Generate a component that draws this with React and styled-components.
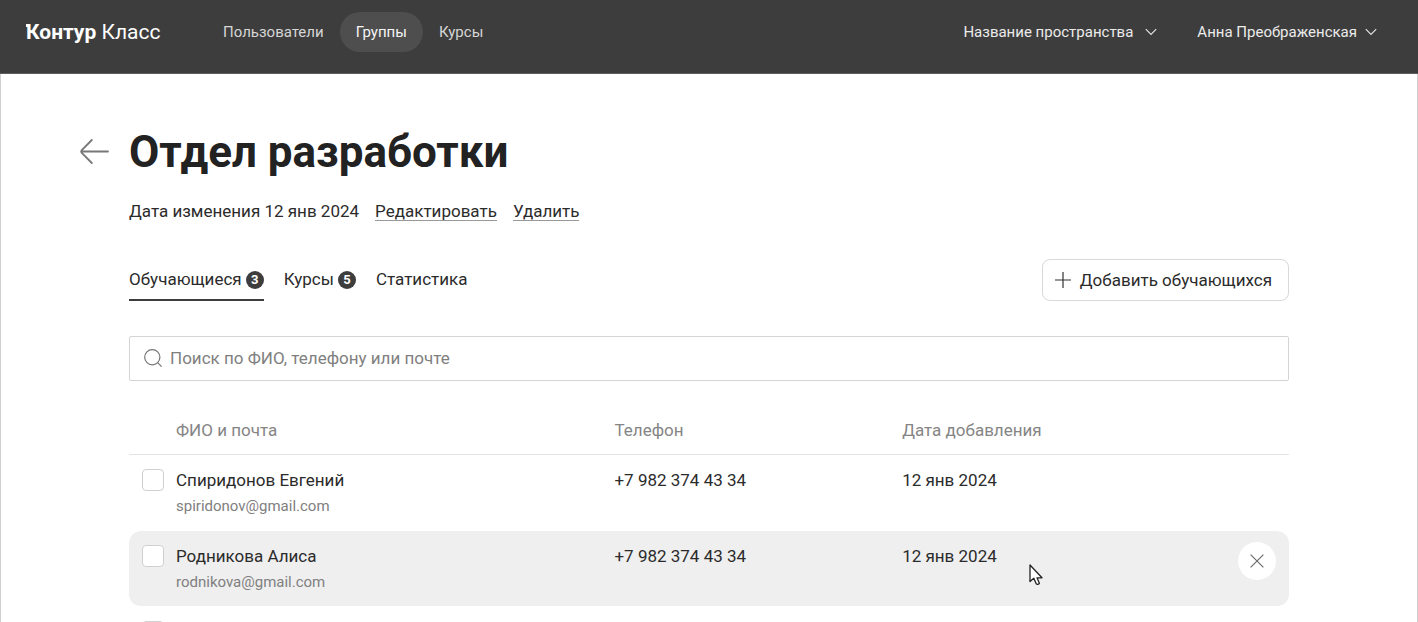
import styled, { createGlobalStyle } from 'styled-components';

const rows = [
  { name: 'Спиридонов Евгений', mail: 'spiridonov@gmail.com', phone: '+7 982 374 43 34', date: '12 янв 2024' },
  { name: 'Родникова Алиса', mail: 'rodnikova@gmail.com', phone: '+7 982 374 43 34', date: '12 янв 2024', hovered: true },
  { name: '', mail: '', phone: '', date: '' },
];

const Chevron = () => (
  <svg width="12" height="8" viewBox="0 0 12 8" fill="none" stroke="#e6e6e6" strokeWidth="1.1">
    <path d="M0.8 1.2 L6 6.4 L11.2 1.2" />
  </svg>
);

const App = () => {
  return (
    <Page>
      <GlobalStyle />
      <TopBar>
        <Logo href="#"><b>Контур</b> Класс</Logo>
        <Nav>
          <NavLink href="#">Пользователи</NavLink>
          <NavLink href="#" $active>Группы</NavLink>
          <NavLink href="#">Курсы</NavLink>
        </Nav>
        <Account>
          <MenuButton $gap="12px">Название пространства <Chevron /></MenuButton>
          <MenuButton $gap="8px">Анна Преображенская <Chevron /></MenuButton>
        </Account>
      </TopBar>
      <Main>
        <Heading>
          <BackLink href="#" aria-label="←">
            <svg width="30" height="26" viewBox="0 0 30 26" fill="none" stroke="#777" strokeWidth="1.8" strokeLinecap="round" strokeLinejoin="round">
              <path d="M28 12.5 H1.5 M11.8 1 L1.8 11.1 Q0.6 12.5 1.8 13.9 L11.8 24" />
            </svg>
          </BackLink>
          <Title>Отдел разработки</Title>
        </Heading>
        <Content>
          <Meta>
            <span>Дата изменения 12 янв 2024</span>
            <MetaLink href="#">Редактировать</MetaLink>
            <MetaLink href="#">Удалить</MetaLink>
          </Meta>
          <Toolbar>
            <Tabs>
              <Tab $active>Обучающиеся <Badge>3</Badge></Tab>
              <Tab>Курсы <Badge>5</Badge></Tab>
              <Tab>Статистика</Tab>
            </Tabs>
            <AddButton>
              <svg width="16" height="16" viewBox="0 0 16 16" fill="none" stroke="#333" strokeWidth="1.2">
                <path d="M8 0 V16 M0 8 H16" />
              </svg>
              Добавить обучающихся
            </AddButton>
          </Toolbar>
          <Search>
            <svg width="18" height="18" viewBox="0 0 18 18" fill="none" stroke="#757575" strokeWidth="1.2">
              <circle cx="8.3" cy="8.3" r="7.6" />
              <path d="M13.6 13.6 L17.6 17.6" />
            </svg>
            <input type="text" placeholder="Поиск по ФИО, телефону или почте" />
          </Search>
          <Table>
            <colgroup>
              <col style={{ width: '47px' }} />
              <col style={{ width: '37.8%' }} />
              <col style={{ width: '24.8%' }} />
              <col />
              <col style={{ width: '51px' }} />
            </colgroup>
            <thead>
              <tr>
                <Th />
                <Th>ФИО и почта</Th>
                <Th>Телефон</Th>
                <Th>Дата добавления</Th>
                <Th />
              </tr>
            </thead>
            <tbody>
              {rows.map((row, i) => (
                <Row key={i} $hovered={row.hovered}>
                  <CheckCell><Checkbox type="checkbox" aria-labelledby={`name-${i}`} /></CheckCell>
                  <Td>
                    <div id={`name-${i}`}>{row.name}</div>
                    <Mail>{row.mail}</Mail>
                  </Td>
                  <Td>{row.phone}</Td>
                  <Td>
                    {row.date}
                    {row.hovered && (
                      <Cursor width="14" height="22" viewBox="0 0 14 22">
                        <path d="M1 1 V17.6 L4.8 14.2 L7.2 19.8 Q8.6 21.2 10.4 19.2 L8 13.8 H13 Z" fill="#fff" stroke="#222" strokeWidth="1.3" strokeLinejoin="round" />
                      </Cursor>
                    )}
                  </Td>
                  <Td>
                    {row.hovered && (
                      <RemoveButton aria-label="×">
                        <svg width="14" height="14" viewBox="0 0 14 14" stroke="#666" strokeWidth="1.1">
                          <path d="M0.6 0.6 L13.4 13.4 M13.4 0.6 L0.6 13.4" />
                        </svg>
                      </RemoveButton>
                    )}
                  </Td>
                </Row>
              ))}
            </tbody>
          </Table>
        </Content>
      </Main>
    </Page>
  )
}

const GlobalStyle = createGlobalStyle`
  * {
    box-sizing: border-box;
  }
  body {
    margin: 0;
    background-color: #fff;
    color: #2b2b2b;
    font-family: Roboto, "Liberation Sans", sans-serif;
    font-size: 17px;
    line-height: 24px;
  }
  button, input {
    font: inherit;
    color: inherit;
  }
  button {
    padding: 0;
    border: none;
    background: none;
    white-space: nowrap;
  }
  svg {
    flex: none;
  }
`

const Page = styled.div`
  height: 100vh;
  overflow: hidden;
`

const TopBar = styled.header`
  display: flex;
  align-items: center;
  padding: 12px 41px 21px 26px;
  background-color: #3d3d3d;
  border-bottom: 1px solid #5c5c5c;
  color: #ebebeb;
  font-size: 15px;
`

const Logo = styled.a`
  width: 180px;
  color: #fff;
  font-size: 21px;
  text-decoration: none;
  white-space: nowrap;

  /* the small serif on the first letter */
  b {
    background: linear-gradient(#fff, #fff) 0 4px / 3px 3px no-repeat;
  }
`

const Nav = styled.nav`
  display: flex;
`

const NavLink = styled.a`
  padding: 8px 16px;
  border-radius: 20px;
  background-color: ${(props) => props.$active ? '#4e4e4e' : 'transparent'};
  color: ${(props) => props.$active ? '#f5f5f5' : '#d6d6d6'};
  text-decoration: none;

  &:first-child {
    padding-left: 17px;
  }
`

const Account = styled.div`
  display: flex;
  gap: 40px;
  margin-left: auto;
`

const MenuButton = styled.button`
  display: flex;
  align-items: center;
  gap: ${(props) => props.$gap};
`

const Main = styled.main`
  min-height: 100vh;
  padding: 50px 128px 0 79px;
  border: 1px solid #d0d0d0;
  border-top: none;
`

const Heading = styled.div`
  display: flex;
  align-items: center;
`

const BackLink = styled.a`
  display: flex;
  width: 49px;
`

const Title = styled.h1`
  margin: 0;
  color: #222;
  font-size: 44px;
  font-weight: 700;
  line-height: 56px;
`

const Content = styled.div`
  margin-left: 49px;
`

const Meta = styled.div`
  display: flex;
  gap: 16px;
  margin-top: 19px;
`

const MetaLink = styled.a`
  height: 22px;
  border-bottom: 1px solid #999;
  color: inherit;
  text-decoration: none;
`

const Toolbar = styled.div`
  display: flex;
  justify-content: space-between;
  margin-top: 36px;
`

const Tabs = styled.div`
  display: flex;
  gap: 20px;
`

const Tab = styled.button`
  display: flex;
  align-items: center;
  gap: 4px;
  height: 42px;
  border-bottom: 2px solid ${(props) => props.$active ? '#3d3d3d' : 'transparent'};
`

const Badge = styled.span`
  width: 18px;
  height: 18px;
  margin-top: 2px;
  border-radius: 50%;
  background-color: #3d3d3d;
  color: #fff;
  font-size: 13px;
  font-weight: 700;
  line-height: 18px;
  text-align: center;
`

const AddButton = styled.button`
  display: flex;
  align-items: center;
  gap: 9px;
  height: 42px;
  padding: 0 16px 0 12px;
  border: 1px solid #d9d9d9;
  border-radius: 8px;
`

const Search = styled.label`
  display: flex;
  align-items: center;
  gap: 8px;
  height: 45px;
  margin-top: 35px;
  padding: 0 14px 1px;
  border: 1px solid #d4d4d4;
  border-radius: 2px;

  input {
    flex: 1;
    padding: 0;
    border: none;
    outline: none;
    background: none;
  }
  input::placeholder {
    color: #808080;
    opacity: 1;
  }
`

const Table = styled.table`
  width: 100%;
  margin-top: 24px;
  table-layout: fixed;
  border-spacing: 0;
`

const Th = styled.th`
  height: 50px;
  padding: 0;
  border-bottom: 1px solid #e4e4e4;
  color: #858585;
  font-weight: 400;
  text-align: left;
`

const Td = styled.td`
  position: relative;
  height: 76px;
  padding: 13px 0 0;
  border-bottom: 1px solid transparent;
  background-clip: padding-box;
  vertical-align: top;
`

const CheckCell = styled(Td)`
  padding: 14px 0 0 13px;
`

const Row = styled.tr`
  td {
    background-color: ${(props) => props.$hovered ? '#efefef' : 'transparent'};
  }
  td:first-child {
    border-radius: 12px 0 0 12px;
  }
  td:last-child {
    border-radius: 0 12px 12px 0;
  }
`

const Mail = styled.div`
  margin-top: 2px;
  color: #808080;
  font-size: 15px;
`

const Checkbox = styled.input`
  display: block;
  appearance: none;
  width: 22px;
  height: 22px;
  margin: 0;
  border: 1px solid #d0d0d0;
  border-radius: 4px;
  background-color: #fff;
`

const RemoveButton = styled.button`
  display: flex;
  align-items: center;
  justify-content: center;
  width: 38px;
  height: 38px;
  margin-top: -2px;
  border-radius: 50%;
  background-color: #fff;
`

const Cursor = styled.svg`
  position: absolute;
  top: 33px;
  left: 127px;
`

export default App;
